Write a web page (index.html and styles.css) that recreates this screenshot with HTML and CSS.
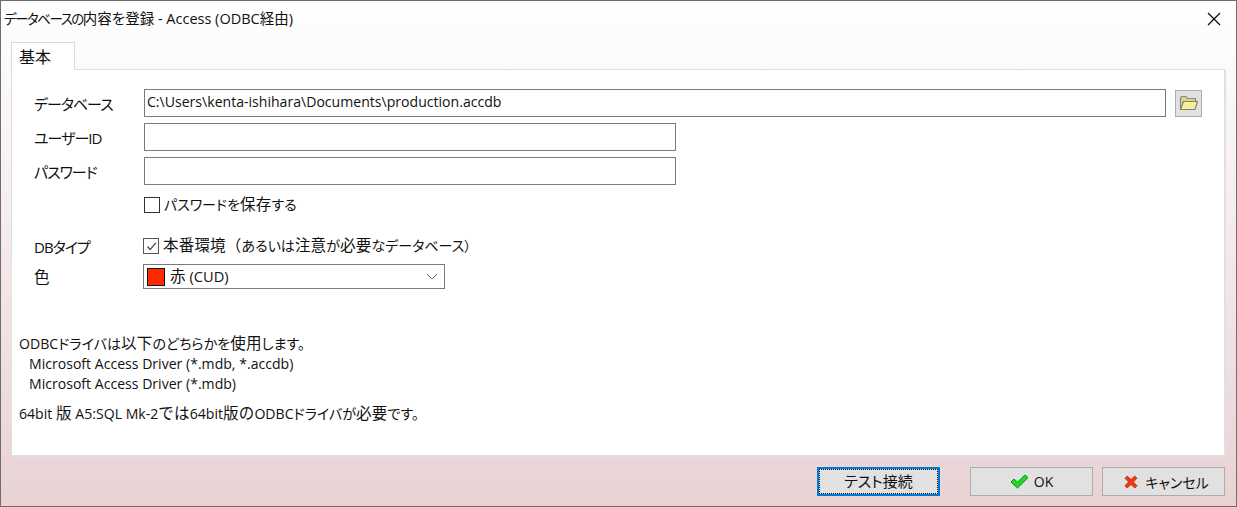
FILE: index.html
```html
<!DOCTYPE html>
<html lang="ja">
<head>
<meta charset="utf-8">
<title>データベースの内容を登録 - Access (ODBC経由)</title>
<link rel="stylesheet" href="styles.css">
</head>
<body>
<div class="window">
  <header class="titlebar">
    <span class="title"><span class="title-kana">データベースの</span>内容を登録 - Access (ODBC経由)</span>
    <svg class="close" width="14" height="14" viewBox="0 0 14 14"><path d="M1 1 L13 13 M13 1 L1 13" stroke="#000" stroke-width="1.1" fill="none"/></svg>
  </header>
  <div class="tabs"><div class="tab">基本</div></div>
  <main class="panel">
    <div class="form">
      <div class="row row-input">
        <label class="label">データベース</label>
        <div class="input input-grow">C:\Users\kenta-ishihara\Documents\production.accdb</div>
        <button class="browse" type="button">
          <svg width="20" height="16" viewBox="0 0 20 16">
            <path d="M1.5 13.5 V3 L2.5 1.5 H7 L8.5 3.5 H16.5 V6" fill="#d9d58e" stroke="#8a8a78" stroke-width="1.2"/>
            <path d="M1.5 14.5 L4.5 6.5 H18.5 L16 14.5 Z" fill="#f4f09a" stroke="#85856f" stroke-width="1.2"/>
          </svg>
        </button>
      </div>
      <div class="row row-input">
        <label class="label">ユーザーID</label>
        <div class="input input-short"></div>
      </div>
      <div class="row row-input">
        <label class="label">パスワード</label>
        <div class="input input-short"></div>
      </div>
      <div class="row row-save">
        <span class="label"></span>
        <span class="check"></span>
        <span class="check-text">パスワードを<span class="k">保存</span>する</span>
      </div>
      <div class="row row-db">
        <label class="label label-db">DBタイプ</label>
        <span class="check check-on">
          <svg width="13" height="13" viewBox="0 0 13 13"><path d="M2.5 6.5 L5.2 9.6 L10.8 2.8" stroke="#444" stroke-width="1.3" fill="none"/></svg>
        </span>
        <span class="check-text check-text-on"><span class="k">本番環境（</span>あるいは<span class="k">注意</span>が<span class="k">必要</span>なデータベース）</span>
      </div>
      <div class="row row-color">
        <label class="label label-color">色</label>
        <div class="select">
          <span class="swatch"></span>
          <span class="select-text"><span class="k">赤</span> (CUD)</span>
          <svg class="chevron" width="12" height="7" viewBox="0 0 12 7"><path d="M1 1 L6 6 L11 1" stroke="#666" stroke-width="1" fill="none"/></svg>
        </div>
      </div>
    </div>
    <div class="notes">
      <p class="note-line">ODBCドライバは<span class="k">以下</span>のどちらかを<span class="k">使用</span>します。</p>
      <p class="note-line note-indent">Microsoft Access Driver (*.mdb, *.accdb)</p>
      <p class="note-line note-indent">Microsoft Access Driver (*.mdb)</p>
      <p class="note-line note-gap">64bit <span class="k">版</span> A5:SQL Mk-2<span class="k">では</span>64bit<span class="k">版の</span>ODBCドライバが<span class="k">必要</span>です。</p>
    </div>
  </main>
  <footer class="actions">
    <button class="btn btn-default" type="button"><span class="focus">テスト接続</span></button>
    <button class="btn btn-ok" type="button">
      <svg width="19" height="15" viewBox="0 0 19 15"><path d="M1 8 L4 5 L7.5 8.2 L15 1 L18 3.6 L7.5 14 Z" fill="#1fdc1f" stroke="#0a8a0a" stroke-width="1"/></svg>
      <span>OK</span>
    </button>
    <button class="btn btn-cancel" type="button">
      <svg width="14" height="14" viewBox="0 0 14 14"><path d="M1 3.2 L3.2 1 L7 4.6 L10.8 1 L13 3.2 L9.4 7 L13 10.8 L10.8 13 L7 9.4 L3.2 13 L1 10.8 L4.6 7 Z" fill="#f03a10" stroke="#a82a10" stroke-width="0.8"/></svg>
      <span>キャンセル</span>
    </button>
  </footer>
</div>
</body>
</html>
```
FILE: styles.css
```css
* { box-sizing: border-box; }
html, body { margin: 0; padding: 0; height: 100%; }
body {
  font-family: "Open Sans", "Noto Sans CJK JP", sans-serif;
  font-size: 14.08px;
  font-feature-settings: "palt";
  color: #111;
  overflow: hidden;
}
.k { font-size: 15.5px; letter-spacing: 0.2px; font-feature-settings: normal; line-height: 1; }
.window {
  width: 1237px;
  height: 507px;
  border: 1px solid #6e6e6e;
  background: linear-gradient(180deg, #ffffff 0%, #fbf7f7 20%, #e8d2d4 100%);
  display: flex;
  flex-direction: column;
}
.titlebar {
  height: 36px;
  padding: 0 15px 4px 3px;
  display: flex;
  align-items: center;
  justify-content: space-between;
  font-size: 14.5px;
}
.title-kana { font-size: 13.5px; letter-spacing: -1.5px; }
.close { margin-top: 4px; }
.tabs { height: 32px; padding: 5px 0 0 10px; display: flex; }
.tab {
  width: 64px;
  height: 28px;
  border: 1px solid #d9d9d9;
  border-bottom: 0;
  background: #fff;
  padding: 2px 0 0 7px;
  font-size: 16px;
  line-height: 24px;
  position: relative;
  z-index: 1;
}
.panel {
  margin: 0 10px;
  height: 388px;
  background: #fff;
  border: 1px solid #e0e0e0;
  border-width: 1px 2px 2px 1px;
  padding: 19px 0 0 7px;
  display: flex;
  flex-direction: column;
}
.form { display: flex; flex-direction: column; padding-left: 15px; }
.row { display: flex; align-items: center; }
.row-input { height: 28px; margin-bottom: 6px; }
.label { width: 110px; flex: none; line-height: 28px; padding-top: 1px; font-size: 15px; letter-spacing: -1px; }
.input {
  height: 28px;
  border: 1px solid #7a7a7a;
  background: #fff;
  padding: 0 2px;
  line-height: 24px;
}
.input-grow { width: 1022px; }
.input-short { width: 532px; }
.browse {
  width: 27px;
  height: 27px;
  margin-left: 9px;
  padding: 0;
  border: 1px solid #adadad;
  background: #e1e1e1;
  display: flex;
  align-items: center;
  justify-content: center;
}
.row-save { height: 16px; margin-top: 6px; }
.check {
  width: 16px;
  height: 16px;
  flex: none;
  border: 1px solid #333;
  background: #fff;
  margin-right: 4px;
  display: flex;
  align-items: center;
  justify-content: center;
}
.check-on { border-color: #555; margin-left: -1px; }
.check-text { line-height: 16px; font-size: 14px; }
.row-db { height: 16px; margin-top: 25px; }
.label-db { line-height: 16px; padding-top: 2px; }
.row-color { margin-top: 10px; height: 25px; }
.label-color { font-size: 15.5px; line-height: 26px; padding-top: 0; letter-spacing: 0; }
.select {
  width: 302px;
  height: 25px;
  margin-left: -1px;
  border: 1px solid #7a7a7a;
  display: flex;
  align-items: center;
  padding: 0 6px 0 3px;
}
.swatch {
  width: 18px;
  height: 18px;
  background: #ff2800;
  border: 1px solid #111;
  margin-right: 5px;
  flex: none;
}
.select-text { flex: 1; line-height: 20px; padding-bottom: 2px; font-size: 14.6px; }
.notes { margin-top: 45px; }
.note-line { margin: 0; line-height: 20px; height: 20px; }
.note-indent { padding-left: 10px; }
.note-gap { margin-top: 10px; }
.actions {
  flex: 1;
  display: flex;
  align-items: flex-start;
  padding: 10px 0 0 816px;
}
.btn {
  width: 123px;
  height: 29px;
  padding: 0;
  border: 1px solid #adadad;
  background: #e1e1e1;
  font: inherit;
  font-feature-settings: inherit;
  font-size: 15px;
  color: #111;
  display: flex;
  align-items: center;
  justify-content: center;
  gap: 5px;
}
.btn-default { border: 2px solid #0078d7; }
.focus {
  flex: 1;
  align-self: stretch;
  border: 1px dotted #111;
  line-height: 23px;
  text-align: center;
}
.btn-ok { margin-left: 30px; font-size: 14px; }
.btn-cancel { margin-left: 9px; gap: 7px; font-size: 14px; padding-left: 6px; }
```
